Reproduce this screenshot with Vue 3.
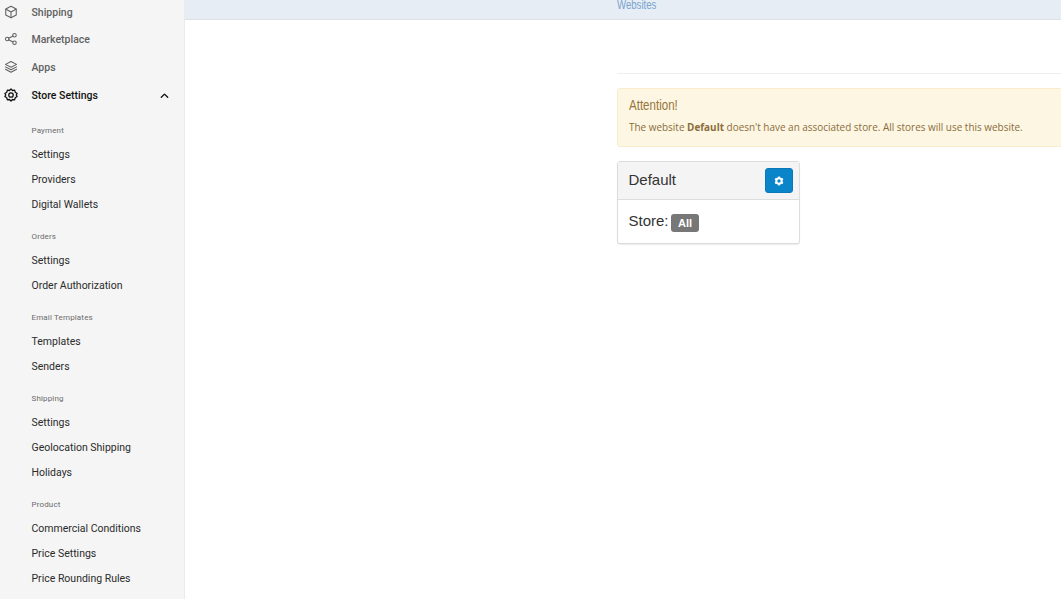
<script setup>
const top = [
  { label: 'Shipping', icon: 'box' },
  { label: 'Marketplace', icon: 'share' },
  { label: 'Apps', icon: 'layers' },
]
const groups = [
  { title: 'Payment', items: ['Settings', 'Providers', 'Digital Wallets'] },
  { title: 'Orders', items: ['Settings', 'Order Authorization'] },
  { title: 'Email Templates', items: ['Templates', 'Senders'] },
  { title: 'Shipping', items: ['Settings', 'Geolocation Shipping', 'Holidays'] },
  { title: 'Product', items: ['Commercial Conditions', 'Price Settings', 'Price Rounding Rules'] },
]
</script>

<template>
  <div class="page">
    <aside class="sidebar">
      <div v-for="t in top" :key="t.label" class="nav-row">
        <svg class="nav-icon" viewBox="0 0 24 24" fill="none" stroke="currentColor" stroke-width="1.800" stroke-linecap="round" stroke-linejoin="round">
          <template v-if="t.icon === 'box'">
            <path d="M12 2l9 5v10l-9 5-9-5V7z" />
            <path d="M3.500 7.200L12 12l8.500-4.800M12 12v9.500" />
          </template>
          <template v-else-if="t.icon === 'share'">
            <circle cx="5.500" cy="12" r="3" />
            <circle cx="18" cy="5.500" r="3" />
            <circle cx="18" cy="18.500" r="3" />
            <path d="M8.200 10.600l7.100-3.700M8.200 13.400l7.100 3.700" />
          </template>
          <template v-else>
            <path d="M12 2.500l9.500 5-9.500 5-9.500-5z" />
            <path d="M2.500 11.800l9.500 5 9.500-5M2.500 16l9.500 5 9.500-5" />
          </template>
        </svg>
        <span>{{ t.label }}</span>
      </div>
      <div class="nav-row active">
        <svg class="nav-icon" viewBox="0 0 24 24" fill="none" stroke="currentColor" stroke-width="2.200" stroke-linejoin="round">
          <path d="M12 1.500l2.500 2.800 3.700-.6 1.100 3.600 3.200 2-1.500 2.700 1.500 2.700-3.200 2-1.100 3.600-3.700-.6-2.500 2.800-2.500-2.800-3.700.6-1.100-3.600-3.200-2 1.500-2.700-1.500-2.700 3.200-2 1.100-3.600 3.700.6z" />
          <circle cx="12" cy="12" r="3.800" />
        </svg>
        <span>Store Settings</span>
        <svg class="chevron" viewBox="0 0 12 12" fill="none" stroke="currentColor" stroke-width="1.500" stroke-linecap="round" stroke-linejoin="round">
          <path d="M2.500 8l3.500-3.500L9.500 8" />
        </svg>
      </div>
      <div class="groups">
        <section v-for="g in groups" :key="g.title" class="group">
          <div class="group-title">{{ g.title }}</div>
          <div v-for="i in g.items" :key="i" class="sub-row">{{ i }}</div>
        </section>
      </div>
    </aside>

    <main class="main">
      <header class="topbar"><span class="crumb">Websites</span></header>
      <div class="content">
        <div class="column">
          <hr class="rule" />
          <div class="alert">
            <div class="alert-title">Attention!</div>
            <p class="alert-text">The website <b>Default</b> doesn't have an associated store. All stores will use this website.</p>
          </div>
          <div class="card">
            <div class="card-head">
              <span class="card-title">Default</span>
              <button class="gear-btn" type="button" aria-label="Settings">
                <svg viewBox="0 0 24 24" width="10" height="10" fill="none" stroke="#fff" stroke-width="5">
                  <circle cx="12" cy="12" r="6.500" />
                  <path stroke-width="4" d="M12 1v5M12 18v5M2.500 6.500l4.300 2.500M17.200 15l4.300 2.500M2.500 17.500L6.800 15M17.200 9l4.300-2.500" />
                </svg>
              </button>
            </div>
            <div class="card-body">Store: <span class="badge">All</span></div>
          </div>
        </div>
      </div>
    </main>
  </div>
</template>

<style>
html, body { margin: 0; height: 100%; overflow: hidden; background: #fff; }
</style>

<style scoped>
.page {
  display: flex;
  width: 1061px;
  height: 599px;
  overflow: hidden;
  font-family: Roboto, sans-serif;
}
.sidebar {
  flex: 0 0 184px;
  height: 599px;
  box-sizing: content-box;
  background: #f5f5f5;
  border-right: 1px solid #ebebeb;
  overflow: hidden;
}
.nav-row {
  display: flex;
  align-items: center;
  height: 28px;
  padding-left: 4px;
  font-size: 10.5px;
  font-weight: 500;
  color: #616161;
}
.nav-row:first-child { margin-top: -1px; height: 26px; }
.nav-row.active { color: #111; }
.nav-icon {
  width: 14px;
  height: 14px;
  margin-right: 13.500px;
  flex: none;
}
.chevron {
  width: 11px;
  height: 11px;
  margin-left: auto;
  margin-right: 14px;
}
.groups { padding-top: 11px; }
.group { margin-bottom: 9px; }
.group-title {
  height: 22px;
  padding-left: 31.500px;
  font-size: 8px;
  line-height: 22px;
  letter-spacing: 0.15px;
  color: #6b6b6b;
}
.sub-row {
  height: 25px;
  line-height: 25px;
  padding-left: 31.500px;
  font-size: 10.5px;
  color: #2b2b2b;
}
.main {
  flex: 1;
  min-width: 0;
  display: flex;
  flex-direction: column;
}
.topbar {
  height: 19px;
  flex: none;
  background: #e6edf5;
  border-bottom: 1px solid #dde1e6;
  padding-left: 432px;
  overflow: hidden;
}
.crumb {
  display: block;
  width: fit-content;
  font-family: "Liberation Sans", sans-serif;
  font-size: 13px;
  line-height: 10px;
  color: #7aa3cc;
  transform: scaleX(0.74);
  transform-origin: left;
}
.content { padding: 53px 0 0 432px; }
.column { width: 460px; }
.rule {
  margin: 0 0 14px;
  border: 0;
  border-top: 1px solid #eee;
}
.alert {
  box-sizing: border-box;
  height: 59px;
  width: 460px;
  padding: 7px 11px;
  background: #fdf6e3;
  border: 1px solid #faebcc;
  border-radius: 3px;
  color: #8a6d3b;
}
.alert-title {
  font-family: "Liberation Sans", sans-serif;
  font-size: 15px;
  line-height: 18px;
  color: #96753a;
  transform: scaleX(0.77);
  transform-origin: left;
}
.alert-text {
  margin: 6px 0 0;
  font-family: "Open Sans", sans-serif;
  font-size: 9.950px;
  line-height: 15px;
}
.card {
  width: 183px;
  box-sizing: border-box;
  margin-top: 14px;
  background: #fff;
  border: 1px solid #ddd;
  border-radius: 3px;
  box-shadow: 0 1px 1px rgba(0, 0, 0, 0.08);
  font-family: "Liberation Sans", sans-serif;
  font-size: 15px;
  color: #333;
}
.card-head {
  display: flex;
  align-items: center;
  justify-content: space-between;
  height: 37px;
  padding: 0 6px 0 10.500px;
  background: #f4f4f4;
  border-bottom: 1px solid #ddd;
}
.card-title { padding-bottom: 2px; }
.gear-btn {
  display: flex;
  align-items: center;
  justify-content: center;
  width: 28px;
  height: 25px;
  padding: 0;
  background: #0a85c9;
  border: 1px solid #0a78b8;
  border-radius: 3px;
}
.card-body {
  display: flex;
  align-items: center;
  gap: 3px;
  height: 41px;
  padding: 0 0 2px 10.500px;
}
.badge {
  display: inline-block;
  width: 28px;
  height: 18px;
  margin-top: 5px;
  margin-left: -0.500px;
  border-radius: 3px;
  background: #777;
  color: #fff;
  font-size: 11px;
  font-weight: 700;
  line-height: 18px;
  text-align: center;
}
</style>
